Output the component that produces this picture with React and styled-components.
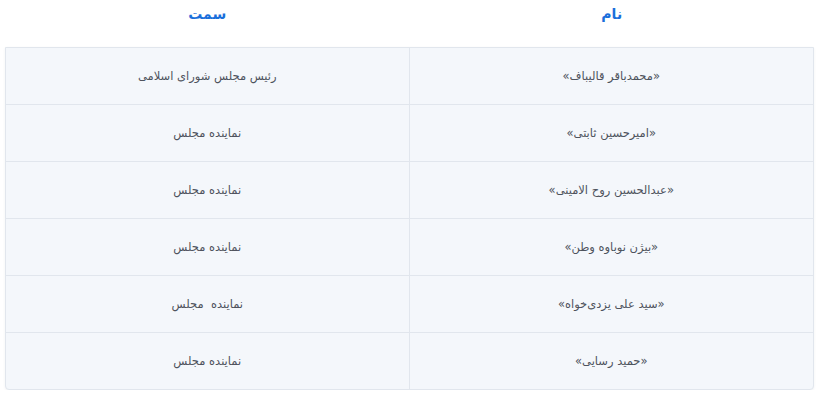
import React from "react";
import styled, { createGlobalStyle } from "styled-components";

const rows = [
  { name: "«محمدباقر قالیباف»", role: "رئیس مجلس شورای اسلامی" },
  { name: "«امیرحسین ثابتی»", role: "نماینده مجلس" },
  { name: "«عبدالحسین روح الامینی»", role: "نماینده مجلس" },
  { name: "«بیژن نوباوه وطن»", role: "نماینده مجلس" },
  { name: "«سید علی یزدی‌خواه»", role: "نماینده  مجلس" },
  { name: "«حمید رسایی»", role: "نماینده مجلس" },
];

const App = () => {
  return (
    <>
      <GlobalStyle />
      <Page dir="rtl">
        <HeadRow>
          <HeadCell>نام</HeadCell>
          <HeadCell>سمت</HeadCell>
        </HeadRow>
        <Table>
          {rows.map((row, i) => (
            <Row key={i} $last={i === rows.length - 1}>
              <Cell>{row.name}</Cell>
              <Cell $divider>{row.role}</Cell>
            </Row>
          ))}
        </Table>
      </Page>
    </>
  );
};

export default App;

const GlobalStyle = createGlobalStyle`
  body {
    margin: 0;
    background: #fff;
    font-family: "DejaVu Sans", "Noto Sans", sans-serif;
  }
`;

const Page = styled.div`
  width: 819px;
  padding: 0 5px;
  box-sizing: border-box;
`;

const HeadRow = styled.div`
  display: grid;
  grid-template-columns: 1fr 1fr;
  height: 47px;
  align-items: start;
`;

const HeadCell = styled.div`
  text-align: center;
  padding-top: 6px;
  font-size: 14px;
  font-weight: 700;
  color: #1a6fdb;
`;

const Table = styled.div`
  background: #f4f7fb;
  border: 1px solid #e1e6ed;
  border-radius: 0 0 4px 4px;
  box-shadow: 0 1px 3px rgba(30, 50, 90, 0.06);
`;

const Row = styled.div`
  display: grid;
  grid-template-columns: 1fr 1fr;
  height: 56px;
  border-bottom: ${(p) => (p.$last ? "none" : "1px solid #e1e6ed")};
`;

const Cell = styled.div`
  display: flex;
  align-items: center;
  justify-content: center;
  white-space: pre;
  font-size: 11.5px;
  color: #4e535d;
  border-right: ${(p) => (p.$divider ? "1px solid #e1e6ed" : "none")};
`;
